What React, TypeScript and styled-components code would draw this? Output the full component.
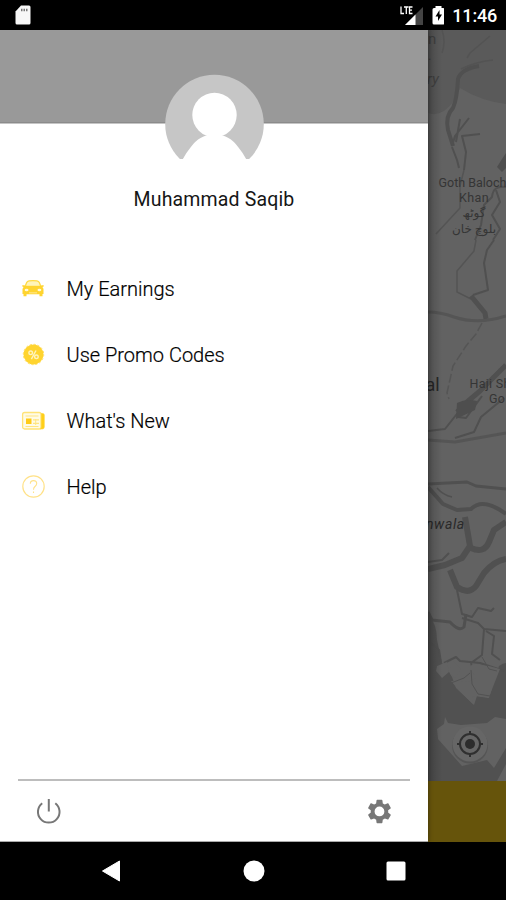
import React from 'react';
import styled, { createGlobalStyle } from 'styled-components';

const GlobalStyle = createGlobalStyle`
  html, body { margin: 0; padding: 0; background: #000; }
  * { box-sizing: border-box; }
`;

const Screen = styled.div`
  display: flex;
  flex-direction: column;
  width: 506px;
  height: 900px;
  overflow: hidden;
  background: #000;
  font-family: Roboto, sans-serif;
`;

const StatusBar = styled.header`
  display: flex;
  align-items: center;
  justify-content: space-between;
  height: 30px;
  padding: 0 9px 0 14px;
  color: #fff;
`;

const StatusGroup = styled.div`
  display: flex;
  align-items: center;
`;

const Clock = styled.span`
  margin-left: 8px;
  padding-top: 2px;
  font-size: 18px;
  line-height: 22px;
  font-weight: 500;
  letter-spacing: -0.2px;
`;

const Content = styled.main`
  display: flex;
  height: 812px;
`;

const Drawer = styled.aside`
  display: flex;
  flex-direction: column;
  width: 428px;
  background: #fff;
  border-bottom: 1px solid #aaa;
  box-shadow: 0 0 5px rgba(0, 0, 0, 0.45);
  z-index: 1;
`;

const Profile = styled.section`
  display: flex;
  flex-direction: column;
  align-items: center;
  height: 226px;
  padding-top: 44px;
  background: linear-gradient(#999 92px, #8b8b8b 92px, #8b8b8b 93px, #fff 94px);
`;

const Name = styled.h1`
  margin: 14px 0 0;
  font-size: 19.5px;
  line-height: 24px;
  font-weight: 400;
  letter-spacing: 0.15px;
  color: #161616;
  white-space: nowrap;
`;

const Menu = styled.nav`
  display: flex;
  flex-direction: column;
  flex: 1;
`;

const MenuItem = styled.a`
  display: flex;
  align-items: center;
  height: 66px;
  padding-left: 21px;
  gap: 21.5px;
`;

const MenuLabel = styled.span`
  font-size: 20px;
  line-height: 24px;
  font-weight: 300;
  letter-spacing: 0;
  color: #000;
  -webkit-text-stroke: 0.2px #000;
`;

const DrawerFooter = styled.footer`
  display: flex;
  align-items: center;
  justify-content: space-between;
  height: 62px;
  margin: 0 18px;
  padding: 0 17px;
  border-top: 2px solid #bdbdbd;
`;

const Backdrop = styled.section`
  display: flex;
  flex-direction: column;
  width: 78px;
`;

const MapView = styled.svg`
  display: block;
  width: 78px;
  height: 751px;
`;

const ActionBar = styled.div`
  flex: 1;
  background: #66540b;
`;

const NavBar = styled.footer`
  display: flex;
  align-items: center;
  justify-content: space-between;
  height: 58px;
  padding: 0 100px 0 101px;
`;

const MapLabel = styled.text<{ $size: number; $color?: string; $spacing?: number }>`
  font-family: Roboto, 'Noto Sans', 'DejaVu Sans', sans-serif;
  font-size: ${(p) => p.$size}px;
  letter-spacing: ${(p) => p.$spacing ?? 0}px;
  fill: ${(p) => p.$color ?? '#353535'};
`;

const CarIcon = () => (
  <svg width="24" height="24" viewBox="0 0 24 24">
    <path d="M4.2 9.3 5.7 5.6Q6.3 4.2 8 3.9 12 3.2 16 3.9q1.700.3 2.300 1.700l1.500 3.700z" fill="#fff4ba" stroke="#ffda43" strokeWidth="1.300" />
    <path d="M1.300 8.200h2.200l.6.900h15.800l.6-.9h2.200v1.400l-1.300.4q1.100 1 1.100 2.600v4.300h-1v2.300h-3v-2H5.500v2h-3v-2.300h-1v-4.300q0-1.600 1.100-2.600l-1.300-.4z" fill="#ffd42f" />
    <ellipse cx="5.600" cy="13" rx="1.900" ry="1.300" fill="#fff9dc" />
    <ellipse cx="18.400" cy="13" rx="1.900" ry="1.300" fill="#fff9dc" />
    <path d="M8 15.800h8" stroke="#ffe682" strokeWidth="1.200" />
  </svg>
);

const PromoIcon = () => (
  <svg width="24" height="24" viewBox="0 0 24 24">
    <circle cx="12.500" cy="11.500" r="10" fill="#ffd42f" />
    <circle cx="12.500" cy="11.500" r="10.200" fill="none" stroke="#ffdc55" strokeWidth="1" strokeDasharray="2 2" />
    <g fill="none" stroke="#fff3bd" strokeWidth="1.400">
      <circle cx="9.700" cy="9.800" r="1.800" />
      <circle cx="15.400" cy="13.800" r="1.800" />
      <path d="m15 7.500-4.600 8.600" />
    </g>
  </svg>
);

const NewsIcon = () => (
  <svg width="24" height="24" viewBox="0 0 24 24">
    <rect x="1.600" y="3.500" width="18.500" height="16.500" rx="2" fill="#fffbe6" stroke="#ffe377" strokeWidth="1.300" />
    <path d="M20.300 4.500h1.500q1.500 0 1.500 1.500v12q0 2-2 2h-2q1 0 1-2z" fill="#ffcf18" stroke="#ffd42f" strokeWidth=".6" />
    <rect x="5" y="9.500" width="5.500" height="5.500" fill="#ffcb18" />
    <path d="M4.500 7h13M12 10.800h6M12 14.400h6M4.500 17.500h13" stroke="#ffe681" strokeWidth="1.200" />
    <path d="M14.700 10v6" stroke="#ffe681" strokeWidth="1" />
  </svg>
);

const HelpIcon = () => (
  <svg width="24" height="24" viewBox="0 0 24 24" fill="none" stroke="#ffe28a">
    <circle cx="12.500" cy="11.500" r="10.700" strokeWidth="1.200" />
    <path d="M9.300 8.800q0-3.200 3.200-3.200t3.200 3q0 1.500-1.700 2.900-1.500 1.200-1.500 3.300M12.500 16.600v1.400" strokeWidth="1.100" />
  </svg>
);

const Avatar = () => (
  <svg width="100" height="100" viewBox="164 73.500 100 100">
    <circle cx="214.500" cy="123.500" r="49.300" fill="#c6c6c6" />
    <circle cx="214.500" cy="114.500" r="22.200" fill="#fff" />
    <path d="M178.500 170q3-12 12-23 9-13 24-13t24 13q9 11 12 23z" fill="#fff" />
    <path d="M164 158.500h101v16H164z" fill="#fff" />
  </svg>
);

const items = [
  { label: 'My Earnings', Icon: CarIcon },
  { label: 'Use Promo Codes', Icon: PromoIcon },
  { label: "What's New", Icon: NewsIcon },
  { label: 'Help', Icon: HelpIcon },
];

const Map = () => (
  <MapView viewBox="428 30 78 751">
    <defs>
      <linearGradient id="edge">
        <stop offset="0" stopColor="#000" stopOpacity=".2" />
        <stop offset="1" stopColor="#000" stopOpacity="0" />
      </linearGradient>
    </defs>
    <path fill="#626262" d="M428 30h78v751h-78z" />
    <path fill="#5a5a5a" d="M428 30h78v74q-25-3-46-16-4 14-16 23-8 5-16 2z" />
    <path fill="#515151" d="M428 614q9 10 9 26l5 23q6 6 10 14l4 11 18 17 3-9q10 2 12 2l10-32q4-3 7-3v118h-78z" />
    <g fill="none" stroke="#505050" strokeLinejoin="round">
      <path strokeWidth="1.500" stroke="#535353" d="M442 30q4 12 0 23M490 36l-20 17-3 5M493 60q-18 2-32 9" />
      <path strokeWidth="4" d="M479 66q-18 3-21 13-1 20-5 29-8 8-5 22l5 16" />
      <path strokeWidth="2" d="M452 146l3-10 14-18M456 142l4-23M452 147l5 13 2 8M480 134l-18 2 4 16-2 18" />
      <path strokeWidth="1.500" stroke="#545454" d="M464 170l-4 16v22l-24 26M476 240l-2 11-17 20v21l14 7" />
      <path strokeWidth="2" d="M506 187q-13-2-14 10l-8 8-3 20-6 15M494 240l-7 10-3 13 4 27-15 5" />
      <path strokeWidth="2" d="M496 190l4 12-8 13 8 14-7 11" />
      <path strokeWidth="5" d="M471 296l14 17 1 6" />
      <path strokeWidth="3" stroke="#555" d="M428 312q12 0 26 5 24 8 52-1M428 440l27 2 51-9" />
      <path strokeWidth="1.500" strokeDasharray="9 3" stroke="#555" d="M482 323l-6 11-10 12-13 20-6 27 2 6" />
      <path strokeWidth="5" d="M506 365l-12 12-14 14-13 11-10 10" />
      <path strokeWidth="2" d="M460 410l-15 19-17 2M458 417l8 1 16-22M504 398l-23 19-7 15-19 6" />
      <path strokeWidth="3" d="M428 484l39-2 9 4 30 3" />
      <path strokeWidth="1.500" d="M437 488q6 7 15 9" />
      <path strokeWidth="4" d="M428 487l15 17 14 6 14-1q12-12 35 5" />
      <path strokeWidth="6" d="M465 517l5 29-8 12-17 7-17 4M471 548q13 6 18-6l5-12 12-8" />
      <path strokeWidth="6" d="M450 570l7 17q12 8 19-1l8-13q10-12 22-14" />
      <path strokeWidth="3" d="M428 612l4 8 18 2q9 10 14 5l2-13" />
      <path strokeWidth="2" d="M428 562l14-2 7-7M457 590l5 24 10 3 6-9 13 3 3-3M462 618l16 5 6 6 22 2M484 629l-2 26-11 8 3 10M486 631l8 5-2 18 8 6M430 642l9 8 2 13M444 663l12-6 4 4 20 2 24 8" />
    </g>
    <g fill="#626262">
      <path d="M437 666l10-4 2 10-7 6-6-7zM452 660l9 9-6 9-5-4z" />
      <path d="M451 681l17 1 10-5-11-8 6-5 16 2 11 3-11 28-17-1 1 8q-13-12-22-23z" />
      <path d="M445 717l3 6 13 2 26-2 8-6 11 2v29l-12 20-7-8-25 6-24-27-1-10 7-5zM506 764l-9 17h9z" />
    </g>
    <path fill="none" stroke="#525252" d="M471 670l1 14 6 10 12 2M451 683l13-5 6-5M482 657l7 12 8 2" />
    <path fill="#4e4e4e" d="M506 153l-4 6-5 8 5 5 4-4zM457 403q9-5 20-2l-2 9-19 9z" />
    <MapLabel $size={15} $color="#424242" x="428" y="44">n</MapLabel>
    <MapLabel $size={13} $color="#424242" x="428" y="60">.</MapLabel>
    <MapLabel $size={15} $color="#424242" fontStyle="italic" x="427" y="84">ry</MapLabel>
    <MapLabel $size={12.500} x="438.500" y="187">Goth Baloch</MapLabel>
    <MapLabel $size={12.500} $spacing={0.4} x="459" y="202">Khan</MapLabel>
    <MapLabel $size={12} x="474" y="217" textAnchor="middle">گوٹھ</MapLabel>
    <MapLabel $size={12} x="474" y="233" textAnchor="middle">بلوچ خان</MapLabel>
    <MapLabel $size={18} $color="#282828" x="425.500" y="391">al</MapLabel>
    <MapLabel $size={12.500} $spacing={0.3} x="469.500" y="388">Haji Sh</MapLabel>
    <MapLabel $size={12.500} $spacing={0.3} x="489" y="403">Go</MapLabel>
    <MapLabel $size={14} $spacing={0.6} $color="#292929" fontStyle="italic" x="426" y="529">nwala</MapLabel>
    <circle cx="470" cy="745.500" r="18" fill="#555" />
    <circle cx="470" cy="744" r="17.500" fill="#666" />
    <g fill="none" stroke="#2f2f2f" strokeWidth="2">
      <circle cx="470" cy="744" r="10" />
      <path d="M470 731v4M470 753v4M457 744h4M479 744h4" />
    </g>
    <circle cx="470" cy="744" r="5" fill="#2c2c2c" />
    <path fill="url(#edge)" d="M428 30h14v751h-14z" />
  </MapView>
);

export default function App() {
  return (
    <Screen>
      <GlobalStyle />
      <StatusBar>
        <svg width="18" height="22" viewBox="0 0 18 22">
          <path d="M7 1.500h8q1.500 0 1.500 1.500v16q0 1.500-1.500 1.500H3q-1.500 0-1.500-1.500V7.500z" fill="#f7f7f7" />
          <path d="M7 6h7" stroke="#777" strokeWidth="2.500" strokeDasharray="1.500 1" />
        </svg>
        <StatusGroup>
          <svg width="46" height="24" viewBox="398 3 46 24">
            <path d="M423 7v18h-18z" fill="#444" />
            <path d="M415.500 14.500V25H405z" fill="#fff" />
            <path d="M401 6.500v7h3M404 7h4.500M406.300 7v7M412.500 7h-3v6.500h3M409.500 10.200h2.500" fill="none" stroke="#fff" strokeWidth="1.300" />
            <path d="M435.500 6h6v2h1.500q1.500 0 1.500 1.500V23q0 1.500-1.500 1.500h-9q-1.500 0-1.500-1.500V9.500Q432.500 8 434 8h1.500z" fill="#fff" />
            <path d="m439.500 10-4 6.500h2.500V21l4-6.500h-2.500z" fill="#000" />
          </svg>
          <Clock>11:46</Clock>
        </StatusGroup>
      </StatusBar>
      <Content>
        <Drawer>
          <Profile>
            <Avatar />
            <Name>Muhammad Saqib</Name>
          </Profile>
          <Menu>
            {items.map(({ label, Icon }) => (
              <MenuItem key={label}>
                <Icon />
                <MenuLabel>{label}</MenuLabel>
              </MenuItem>
            ))}
          </Menu>
          <DrawerFooter>
            <svg width="28" height="28" viewBox="0 0 28 28" fill="none" stroke="#777" strokeWidth="2">
              <path d="M7.200 6.200a10.800 10.800 0 1 0 13.100 0M13.800 2v12.500" />
            </svg>
            <svg width="28" height="28" viewBox="-0.4 -0.4 24 24">
              <path fill="#777" d="M19.430 12.980c.04-.32.070-.64.070-.98s-.03-.66-.07-.98l2.110-1.650c.19-.15.24-.42.12-.64l-2-3.460c-.12-.22-.39-.3-.61-.22l-2.490 1c-.52-.4-1.080-.73-1.690-.98l-.38-2.650A.488.488 0 0 0 14 2h-4c-.25 0-.46.180-.49.420l-.38 2.650c-.61.250-1.170.590-1.690.980l-2.490-1c-.23-.09-.49 0-.61.220l-2 3.460c-.13.220-.07.490.120.640l2.110 1.650c-.04.320-.07.650-.07.980s.03.660.070.980l-2.110 1.650c-.19.150-.24.420-.12.640l2 3.460c.12.220.39.300.61.220l2.490-1c.52.400 1.080.730 1.690.980l.38 2.650c.03.240.24.420.49.420h4c.25 0 .46-.18.490-.42l.38-2.650c.61-.25 1.170-.59 1.690-.98l2.490 1c.23.090.49 0 .61-.22l2-3.460c.12-.22.07-.49-.12-.64zM12 16.200a4.200 4.200 0 1 1 0-8.400 4.200 4.200 0 0 1 0 8.400z" />
            </svg>
          </DrawerFooter>
        </Drawer>
        <Backdrop>
          <Map />
          <ActionBar />
        </Backdrop>
      </Content>
      <NavBar>
        <svg width="20" height="22" viewBox="0 0 20 22"><path d="M18.500 1v20L1.500 11z" fill="#fff" stroke="#fff" strokeLinejoin="round" /></svg>
        <svg width="22" height="22" viewBox="0 0 22 22"><circle cx="11" cy="11" r="10.500" fill="#fff" /></svg>
        <svg width="20" height="20" viewBox="0 0 20 20"><rect x=".5" y=".5" width="19" height="19" rx="1.500" fill="#fff" /></svg>
      </NavBar>
    </Screen>
  );
}
